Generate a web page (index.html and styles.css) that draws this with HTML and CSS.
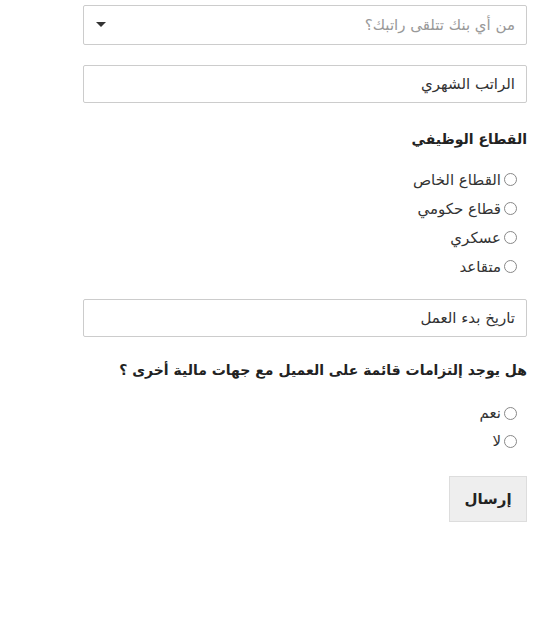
FILE: index.html
```html
<!DOCTYPE html>
<html lang="ar" dir="rtl">
<head>
<meta charset="utf-8">
<link rel="stylesheet" href="styles.css">
</head>
<body>
<form class="form">
  <div class="field select-field">
    <div class="select">
      <span class="placeholder">من أي بنك تتلقى راتبك؟</span>
      <span class="caret"></span>
    </div>
  </div>
  <div class="field">
    <div class="input">الراتب الشهري</div>
  </div>
  <div class="group">
    <h4 class="label">القطاع الوظيفي</h4>
    <ul class="radios">
      <li><span class="radio"></span>القطاع الخاص</li>
      <li><span class="radio"></span>قطاع حكومي</li>
      <li><span class="radio"></span>عسكري</li>
      <li><span class="radio"></span>متقاعد</li>
    </ul>
  </div>
  <div class="field">
    <div class="input">تاريخ بدء العمل</div>
  </div>
  <div class="group">
    <h4 class="label label-question">هل يوجد إلتزامات قائمة على العميل مع جهات مالية أخرى ؟</h4>
    <ul class="radios radios-tight">
      <li><span class="radio"></span>نعم</li>
      <li><span class="radio"></span>لا</li>
    </ul>
  </div>
  <div class="actions">
    <button type="button" class="btn">إرسال</button>
  </div>
</form>
</body>
</html>
```
FILE: styles.css
```css
html, body { margin: 0; padding: 0; background: #fff; }
body {
  font-family: "DejaVu Sans", "Noto Sans", sans-serif;
  color: #333;
  font-size: 14px;
}
.form {
  width: 444px;
  margin: 5px 21px 0 0;
}
.field { margin-bottom: 20px; }
.select, .input {
  box-sizing: border-box;
  border: 1px solid #ccc;
  border-radius: 2px;
  display: flex;
  align-items: center;
  padding: 0 11px;
  font-size: 15px;
  color: #333;
}
.select { height: 40px; justify-content: space-between; }
.input { height: 38px; }
.placeholder { color: #999; }
.caret {
  width: 0; height: 0;
  border-left: 5px solid transparent;
  border-right: 5px solid transparent;
  border-top: 5px solid #333;
  margin-left: 1px;
  margin-bottom: 2px;
}
.group { padding-top: 6px; margin-bottom: 18px; }
.label {
  margin: 0 0 16px;
  font-size: 14px;
  font-weight: bold;
  color: #222;
  line-height: 20px;
}
.label-question { margin-top: -3px; margin-bottom: 19px; }
.radios {
  list-style: none;
  margin: 0 10px 0 0;
  padding: 0;
}
.radios li {
  display: flex;
  align-items: center;
  height: 29px;
  font-size: 15px;
  color: #333;
}
.radios-tight li { height: 28px; }
.radio {
  width: 11px; height: 11px;
  border: 1px solid #888;
  border-radius: 50%;
  margin-left: 3px;
  flex: none;
}
.actions { display: flex; padding-top: 3px; }
.btn {
  width: 78px; height: 46px;
  background: #eee;
  border: 1px solid #ddd;
  font-family: inherit;
  font-weight: bold;
  font-size: 15px;
  color: #222;
}
```
